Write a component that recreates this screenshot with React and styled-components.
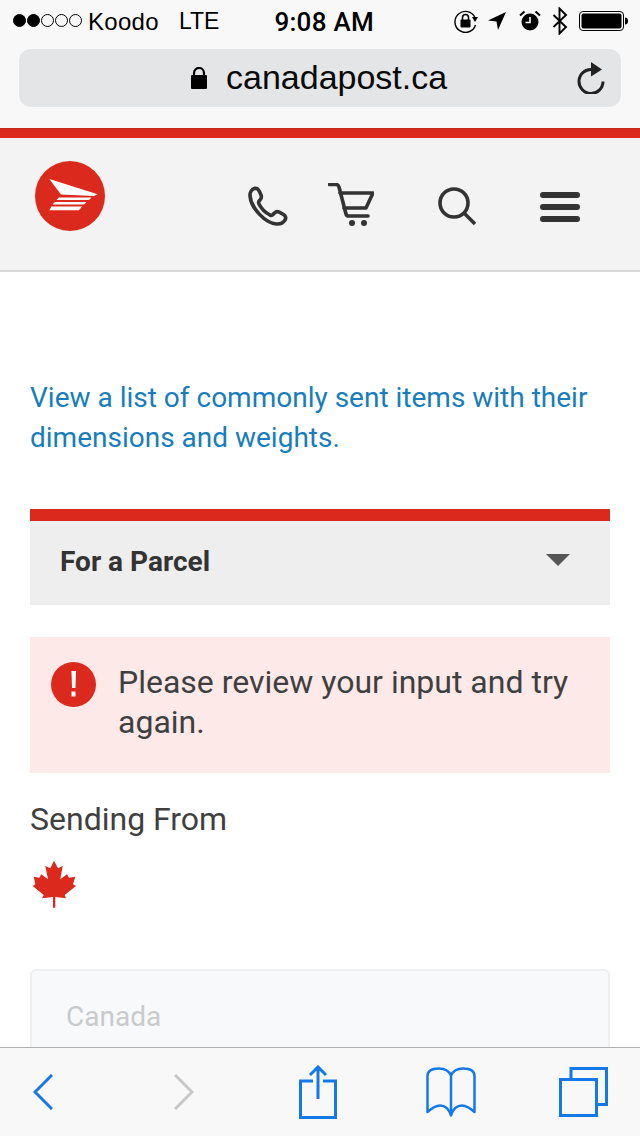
import React from "react";
import styled, { createGlobalStyle } from "styled-components";

const Global = createGlobalStyle`
  html, body {
    margin: 0;
    padding: 0;
    background: #fff;
  }
  * {
    box-sizing: border-box;
  }
`;

const Phone = styled.div`
  width: 640px;
  height: 1136px;
  display: flex;
  flex-direction: column;
  overflow: hidden;
  font-family: Roboto, sans-serif;
  color: #333;
`;

const Chrome = styled.div`
  height: 128px;
  flex: none;
  background: #f8f8f9;
  color: #000;
`;

const StatusBar = styled.div`
  height: 41px;
  display: flex;
  align-items: center;
  padding: 0 12px 0 13px;
  font-family: "Liberation Sans", sans-serif;
  font-size: 24px;
`;

const Dots = styled.div`
  display: flex;
  gap: 1px;
`;

const Dot = styled.span`
  width: 13px;
  height: 13px;
  border-radius: 50%;
  border: 1px solid #000;
  background: ${(p) => (p.$on ? "#000" : "transparent")};
`;

const Carrier = styled.span`
  margin-left: 6px;
  padding-top: 2px;
  letter-spacing: 0.3px;
`;

const Network = styled.span`
  margin-left: 20px;
  padding-top: 2px;
  font-size: 23px;
`;

const Clock = styled.span`
  margin-left: 55px;
  padding-top: 2px;
  font-family: Roboto, sans-serif;
  font-weight: 500;
  font-size: 26px;
  letter-spacing: 0.3px;
`;

const StatusIcons = styled.div`
  margin-left: auto;
  display: flex;
  align-items: center;
`;

const StatusIcon = styled.svg`
  display: block;
  margin-left: ${(p) => p.$gap || 0}px;
`;

const UrlBar = styled.div`
  margin: 8px 19px 0;
  height: 58px;
  border-radius: 12px;
  background: #e4e5e7;
  display: flex;
  align-items: center;
  padding: 0 15px 0 172px;
`;

const UrlText = styled.span`
  margin-left: 19px;
  padding-bottom: 1px;
  font-family: "Liberation Sans", sans-serif;
  font-size: 34px;
  color: #0a0a0a;
`;

const Reload = styled.svg`
  margin-left: auto;
`;

const RedRule = styled.div`
  height: 10px;
  flex: none;
  background: #dc291e;
  border-top: 1px solid #c9261c;
`;

const Header = styled.header`
  height: 134px;
  flex: none;
  display: flex;
  align-items: flex-start;
  justify-content: space-between;
  padding: 23px 60px 0 35px;
  background: #f3f3f3;
  border-bottom: 2px solid #d9d9d9;
`;

const Nav = styled.nav`
  display: flex;
  align-items: center;
  height: 44px;
  margin-top: 22px;
`;

const NavIcon = styled.svg`
  display: block;
  margin-left: ${(p) => p.$gap || 0}px;
  fill: none;
  stroke: #333;
  stroke-width: 3.6;
  stroke-linecap: round;
  stroke-linejoin: round;
`;

const Content = styled.main`
  flex: 1;
  min-height: 0;
  overflow: hidden;
  padding: 106px 30px 0;
  background: #fff;
`;

const InfoLink = styled.a`
  display: block;
  font-size: 28px;
  line-height: 40px;
  color: #177dbd;
  text-decoration: none;
`;

const Dropdown = styled.div`
  margin-top: 51px;
  height: 96px;
  border-top: 12px solid #dc291e;
  background: #eee;
  display: flex;
  align-items: center;
  justify-content: space-between;
  padding: 0 40px 4px 30px;
  font-size: 28px;
  font-weight: 700;
  color: #333;
`;

const Caret = styled.span`
  width: 0;
  height: 0;
  margin-bottom: 2px;
  border-left: 12px solid transparent;
  border-right: 12px solid transparent;
  border-top: 12px solid #555;
`;

const Alert = styled.div`
  margin-top: 32px;
  height: 136px;
  background: #fde9e7;
  display: flex;
  align-items: flex-start;
  padding: 25px 30px 0 21px;
`;

const AlertIcon = styled.svg`
  flex: none;
  margin-right: 22px;
`;

const AlertText = styled.p`
  margin: 0;
  font-size: 32px;
  line-height: 40px;
  color: #3f3f3f;
`;

const SectionLabel = styled.h2`
  margin: 26px 0 0;
  font-size: 32px;
  line-height: 40px;
  font-weight: 400;
  color: #3f3f3f;
`;

const Leaf = styled.svg`
  display: block;
  margin: 21px 0 0 2px;
`;

const CountryInput = styled.div`
  margin-top: 61px;
  height: 110px;
  padding: 30px 34px 0;
  border: 2px solid #eeeff1;
  border-radius: 6px;
  background: #f8f9fb;
  font-size: 28px;
  line-height: 32px;
  color: #c9cacc;
`;

const Toolbar = styled.footer`
  height: 89px;
  flex: none;
  display: flex;
  align-items: center;
  padding: 0 31px 0 33px;
  background: #f8f8f9;
  border-top: 1px solid #b0b0b0;
`;

const ToolIcon = styled.svg`
  display: block;
  margin-left: ${(p) => p.$gap || 0}px;
  fill: none;
  stroke: ${(p) => (p.$off ? "#c8c8ca" : "#1479e6")};
  stroke-width: ${(p) => (p.$thin ? 2.5 : 3)};
`;

export default function App() {
  return (
    <Phone>
      <Global />
      <Chrome>
        <StatusBar>
          <Dots>
            <Dot $on />
            <Dot $on />
            <Dot />
            <Dot />
            <Dot />
          </Dots>
          <Carrier>Koodo</Carrier>
          <Network>LTE</Network>
          <Clock>9:08 AM</Clock>
          <StatusIcons>
            <StatusIcon width="24" height="24" viewBox="0 0 24 24">
              <path d="M21 8.5A10.5 10.5 0 1 0 21.5 16" fill="none" stroke="#000" strokeWidth="1.4" />
              <path d="M18 8h6l-3 5z" fill="#000" />
              <rect x="6.5" y="10.5" width="10" height="8" rx="1" fill="#000" />
              <path d="M8.5 11V8.5a3 3 0 0 1 6 0V11" fill="none" stroke="#000" strokeWidth="1.6" />
            </StatusIcon>
            <StatusIcon $gap={9} width="20" height="20" viewBox="0 0 20 20">
              <path d="M19 1 1 9.5l8.5 1L11 19z" fill="#000" />
            </StatusIcon>
            <StatusIcon $gap={12} width="22" height="24" viewBox="0 0 22 24">
              <circle cx="11" cy="13" r="8.5" fill="#000" />
              <path d="M11 8v5.5H6.5" fill="none" stroke="#fff" strokeWidth="1.6" />
              <path d="M1 6.5 5.5 2.5M21 6.5 16.5 2.5" stroke="#000" strokeWidth="2" />
            </StatusIcon>
            <StatusIcon $gap={11} width="16" height="28" viewBox="0 0 16 28">
              <path d="M1.5 8 14 20l-6.5 6.5v-25L14 8 1.5 20" fill="none" stroke="#000" strokeWidth="1.9" />
            </StatusIcon>
            <StatusIcon $gap={11} width="49" height="20" viewBox="0 0 49 20">
              <rect x="0.5" y="0.5" width="44" height="19" rx="3.5" fill="none" stroke="#000" />
              <rect x="2.5" y="2.5" width="40" height="15" rx="2" fill="#000" />
              <path d="M46 6.5c2 0 3 1.5 3 3.5s-1 3.5-3 3.5z" fill="#000" />
            </StatusIcon>
          </StatusIcons>
        </StatusBar>
        <UrlBar>
          <svg width="16" height="22" viewBox="0 0 16 22">
            <rect x="0" y="8" width="16" height="14" rx="1" fill="#000" />
            <path d="M3 9V6a5 5 0 0 1 10 0v3" fill="none" stroke="#000" strokeWidth="2.2" />
          </svg>
          <UrlText>canadapost.ca</UrlText>
          <Reload width="30" height="32" viewBox="0 0 30 32">
            <path d="M16 7.5A12 12 0 1 0 27 19.5" fill="none" stroke="#222" strokeWidth="3" />
            <path d="M15 0l11 7.5-11 7z" fill="#222" />
          </Reload>
        </UrlBar>
      </Chrome>
      <RedRule />
      <Header>
        <svg width="70" height="70" viewBox="0 0 70 70">
          <circle cx="35" cy="35" r="35" fill="#dc291e" />
          <path d="M14.3 18 62.7 33.3 59 35 26 33.5z" fill="#fff" />
          <path d="M24 36.500h32.500l-2.500 2.500H21.500z" fill="#fff" />
          <path d="M20 41h31.500l-2.500 2.500H17.500z" fill="#fff" />
          <path d="M16.500 45.500H47L44 49.200H14.300z" fill="#fff" />
        </svg>
        <Nav>
          <NavIcon width="40" height="44" viewBox="0 -3 40 44">
            <path d="M7 2.200C9 2 10.500 3.500 11.500 5.500L13 9C13.800 11 13.400 12.500 12 14L11 15.200C10.500 16 10.500 17 11 18C13 22 18 27 22 29C23.300 29.600 24.200 29.500 25 28.600L26.500 27C27.800 25.600 29.500 25.300 31.200 26.200L35.500 28.500C37.700 29.800 38.300 32 37 34C35 37 32 38.300 28.500 38C17 37 3 22 2 10C1.800 6.500 3.500 3 7 2.200Z" />
          </NavIcon>
          <NavIcon $gap={40} width="46" height="44" viewBox="0 0 46 44">
            <path d="M1.500 1.500H8C9.500 1.500 10.500 2.500 11 4L18 31C18.400 32.500 19 33 20.500 33H40" />
            <path d="M12 10H45L38 25H16" />
            <circle cx="24" cy="40" r="3" fill="#333" stroke="none" />
            <circle cx="36" cy="40" r="3" fill="#333" stroke="none" />
          </NavIcon>
          <NavIcon $gap={64} width="38" height="44" viewBox="0 -4 38 44">
            <circle cx="16" cy="16" r="14" />
            <path d="M26 26 37 37" strokeLinecap="butt" />
          </NavIcon>
          <NavIcon $gap={64} width="40" height="44" viewBox="0 0 40 44">
            <path d="M3 12h34M3 24h34M3 36h34" strokeWidth="6" />
          </NavIcon>
        </Nav>
      </Header>
      <Content>
        <InfoLink>View a list of commonly sent items with their dimensions and weights.</InfoLink>
        <Dropdown>
          For a Parcel
          <Caret />
        </Dropdown>
        <Alert>
          <AlertIcon width="45" height="45" viewBox="0 0 45 45">
            <circle cx="22.5" cy="22.5" r="22.5" fill="#dc291e" />
            <path d="M20.500 9h4.500l-.5 17h-3.500z" fill="#fff" />
            <rect x="20.5" y="29.5" width="4" height="5" fill="#fff" />
          </AlertIcon>
          <AlertText>Please review your input and try again.</AlertText>
        </Alert>
        <SectionLabel>Sending From</SectionLabel>
        <Leaf width="44" height="48" viewBox="0 0 44 48">
          <path
            d="M22 .7 26 8.300 30.700 6 28.300 19.300 35 14.300 37 17.700 43.300 16.700 41 24.300 44 26 32.700 35 34 38.300 23.300 37V47.700H21V37L10 38.300 11.700 35 .7 26 3.300 24.300 1.700 16.700 7.300 17.700 9.300 14.300 16 19.300 13.300 6 18.300 8.300z"
            fill="#dc291e"
          />
        </Leaf>
        <CountryInput>Canada</CountryInput>
      </Content>
      <Toolbar>
        <ToolIcon width="20" height="36" viewBox="0 0 20 36">
          <path d="M19 1 2 18l17 17" />
        </ToolIcon>
        <ToolIcon $off $gap={121} width="20" height="36" viewBox="0 0 20 36">
          <path d="M1 1l17 17L1 35" />
        </ToolIcon>
        <ToolIcon $gap={105} width="38" height="54" viewBox="0 0 38 54">
          <path d="M14 16H1.500v36.500h35V16H24" />
          <path d="M19 34V2M11 10l8-8 8 8" />
        </ToolIcon>
        <ToolIcon $thin $gap={89} width="50" height="50" viewBox="0 0 50 50">
          <path d="M25 8.500C23 4 19 1.500 13 1.500 7 1.500 1.500 3.500 1.500 9V45C6 41 10 38.500 14 38.500 19 38.500 23 42 25 48.500 27 42 31 38.500 36 38.500 40 38.500 44 41 48.500 45V9C48.500 3.500 43 1.500 37 1.500 31 1.500 27 4 25 8.500ZM25 8.500V48.500" strokeLinejoin="round" />
        </ToolIcon>
        <ToolIcon $gap={83} width="49" height="50" viewBox="0 0 49 50">
          <path d="M12 12V1.500h35.500v36H38" />
          <rect x="1.5" y="12.5" width="36" height="36" />
        </ToolIcon>
      </Toolbar>
    </Phone>
  );
}
